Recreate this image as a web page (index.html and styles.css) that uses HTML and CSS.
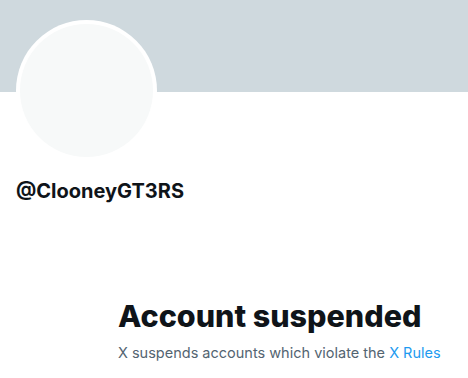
FILE: index.html
```html
<!DOCTYPE html>
<html lang="en">
<head>
    <meta charset="UTF-8">
    <meta name="viewport" content="width=device-width, initial-scale=1.0">
    <title>@ClooneyGT3RS</title>
    <link rel="stylesheet" href="styles.css">
</head>
<body>
    <!-- Banner -->
    <div class="banner"></div>

    <!-- Profile -->
    <div class="profile">
        <div class="avatar"><div class="avatar-inner"></div></div>
        <div class="handle">@ClooneyGT3RS</div>
    </div>

    <!-- Suspended Message -->
    <div class="empty-state">
        <h2>Account suspended</h2>
        <p>X suspends accounts which violate the <a href="#">X Rules</a></p>
    </div>
</body>
</html>
```

FILE: styles.css
```css
/* General Styles */
body {
    margin: 0;
    padding: 0;
    font-family: Inter, "Noto Sans", sans-serif;
    background: #fff;
    color: #0f1419;
    overflow: hidden;
}

/* Banner */
.banner {
    height: 92px;
    background: #cfd9de;
}

/* Profile */
.profile {
    padding: 0 16px;
    margin-top: -72px;
}

.avatar {
    width: 141px;
    height: 141px;
    border-radius: 50%;
    background: #fff;
    display: flex;
    align-items: center;
    justify-content: center;
}

.avatar-inner {
    width: 133px;
    height: 133px;
    border-radius: 50%;
    background: #f7f9f9;
}

.handle {
    margin-top: 18px;
    font-size: 20px;
    font-weight: 700;
    line-height: 24px;
}

/* Empty State */
.empty-state {
    margin: 95px 0 0 118px;
}

.empty-state h2 {
    margin: 0;
    font-size: 30.5px;
    font-weight: 800;
    line-height: 36px;
}

.empty-state p {
    margin: 9px 0 0;
    font-size: 14.5px;
    line-height: 20px;
    color: #536471;
}

.empty-state a {
    color: #1d9bf0;
    text-decoration: none;
}
```
